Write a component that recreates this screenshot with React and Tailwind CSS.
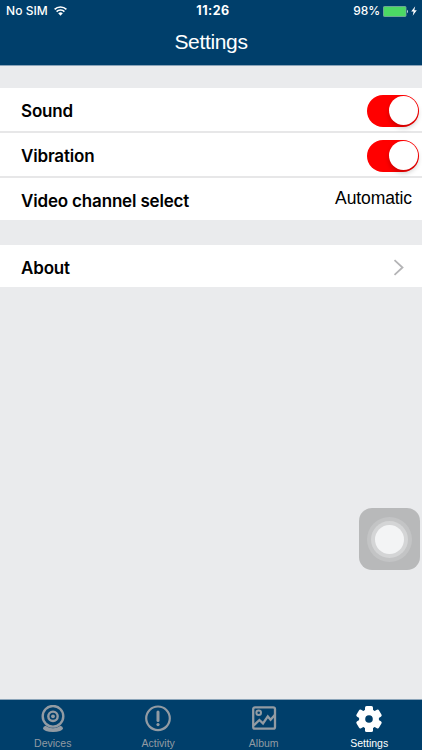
import React from "react";

function StatusBar() {
  return (
    <div className="relative flex h-[22px] items-center justify-between pl-[6px] pr-[5px] font-['Inter',sans-serif] text-[12px] leading-none text-white">
      <div className="flex items-center gap-[6px]">
        <span className="font-medium tracking-[0.05px]">No SIM</span>
        <svg className="mb-[1px]" width="13" height="10" viewBox="0 0 13 10" fill="none" stroke="currentColor" strokeWidth="1.6">
          <path d="M0.6 3.4a8.4 8.4 0 0 1 11.8 0" />
          <path d="M2.6 5.6a5.5 5.5 0 0 1 7.8 0" />
          <path d="M4.2 7.3a3.3 3.3 0 0 1 4.6 0L6.5 9.7z" fill="currentColor" stroke="none" />
        </svg>
      </div>
      <span className="absolute left-[213px] -translate-x-1/2 text-[12.5px] font-bold tracking-[0.5px]">11:26</span>
      <div className="flex items-center">
        <span className="mr-[3px] font-medium tracking-[-0.1px]">98%</span>
        <svg width="26" height="11" viewBox="0 0 26 11">
          <rect x="0.5" y="0.5" width="22.5" height="10" rx="0.8" fill="#4cd964" stroke="#7fae9f" strokeWidth="0.8" />
          <path d="M24 3.8c1.3.4 1.3 3 0 3.4z" fill="#c5d5e0" />
        </svg>
        <svg className="ml-[2px]" width="6" height="10" viewBox="0 0 6 10" fill="currentColor">
          <path d="M4.2 0.3 0.2 5.5h2.4L1.7 9.7 5.8 4.3H3.3z" />
        </svg>
      </div>
    </div>
  );
}

function Toggle() {
  return (
    <div className="flex h-[32px] w-[52px] items-center justify-end rounded-full bg-[#ff0000] pr-[1.5px]">
      <div className="h-[29px] w-[29px] rounded-full bg-white shadow-[0_3px_5px_rgba(0,0,0,0.2)]" />
    </div>
  );
}

function Row({ label, last, children }) {
  return (
    <div className={`flex items-center justify-between bg-white pl-[21px] ${last ? "h-[42px]" : "h-[43px]"}`}>
      <span
        className={`font-['Inter',sans-serif] text-[17px] font-semibold tracking-[-0.17px] text-black ${last ? "pt-[5px]" : "pt-[4px]"}`}
      >
        {label}
      </span>
      {children}
    </div>
  );
}

function DevicesIcon() {
  return (
    <svg width="28" height="28" viewBox="0 0 28 28" fill="none" stroke="currentColor">
      <ellipse cx="14" cy="23.2" rx="10" ry="3.8" fill="currentColor" stroke="none" />
      <circle cx="14" cy="11.3" r="11.9" fill="#003f6b" stroke="none" />
      <circle cx="14" cy="11.3" r="10.3" strokeWidth="2.4" />
      <circle cx="14" cy="11.3" r="4.7" strokeWidth="2.4" />
      <circle cx="14" cy="11.3" r="1.9" fill="currentColor" stroke="none" />
    </svg>
  );
}

function ActivityIcon() {
  return (
    <svg width="28" height="28" viewBox="0 0 28 28" fill="none" stroke="currentColor">
      <circle cx="14" cy="13.3" r="11.8" strokeWidth="2.2" />
      <path d="M14 7v8.4" strokeWidth="3" strokeLinecap="round" />
      <circle cx="14" cy="19.6" r="1.6" fill="currentColor" stroke="none" />
    </svg>
  );
}

function AlbumIcon() {
  return (
    <svg width="28" height="28" viewBox="0 0 28 28" fill="none" stroke="currentColor" strokeWidth="2.3">
      <rect x="3.2" y="2.3" width="21.8" height="21.4" rx="1.8" />
      <circle cx="8.7" cy="7.7" r="2.3" strokeWidth="2" />
      <path d="M3.8 20.4l5.6-5.4 3.6 3.4 4.8-7 2.8 3.4L24.8 10" />
    </svg>
  );
}

function SettingsIcon() {
  return (
    <svg width="28" height="28" viewBox="0 0 28 28" fill="currentColor">
      <circle cx="14" cy="14" r="10" />
      <rect x="10" y="1" width="8" height="26" rx="1.6" />
      <rect x="10" y="1" width="8" height="26" rx="1.6" transform="rotate(60 14 14)" />
      <rect x="10" y="1" width="8" height="26" rx="1.6" transform="rotate(120 14 14)" />
      <circle cx="14" cy="14" r="3.8" fill="#003f6b" />
    </svg>
  );
}

const tabs = [
  { name: "Devices", icon: DevicesIcon },
  { name: "Activity", icon: ActivityIcon },
  { name: "Album", icon: AlbumIcon },
  { name: "Settings", icon: SettingsIcon, active: true }
];

function App() {
  return (
    <div className="relative flex h-[750px] w-[422px] flex-col overflow-hidden bg-[#eaebed] font-['Liberation_Sans',sans-serif]">
      <header className="h-[66px] border-b border-[#8ba4b9] bg-[#003f6b]">
        <StatusBar />
        <h1 className="pt-[4px] text-center text-[21px] leading-[32px] tracking-[-0.35px] text-white">Settings</h1>
      </header>

      <main className="flex-1 pt-[22px]">
        <div className="flex flex-col gap-[2px] bg-[#e7e7e8]">
          <Row label="Sound">
            <div className="pr-[3px] pt-[2px]">
              <Toggle />
            </div>
          </Row>
          <Row label="Vibration">
            <div className="pr-[3px] pt-[2px]">
              <Toggle />
            </div>
          </Row>
          <Row label="Video channel select" last>
            <span className="pb-[1px] pr-[10px] text-[17.5px] tracking-[-0.1px] text-black">Automatic</span>
          </Row>
        </div>

        <div className="mt-[25px]">
          <Row label="About" last>
            <svg className="mr-[17px] mt-[2px]" width="12" height="17" viewBox="0 0 12 17" fill="none" stroke="#b4b4b6" strokeWidth="1.8">
              <path d="M1.5 1.2 9.5 8.5 1.5 15.8" />
            </svg>
          </Row>
        </div>
      </main>

      <nav className="grid h-[51px] grid-cols-4 border-t border-[#8ba4b9] bg-[#003f6b]">
        {tabs.map((tab) => {
          const Icon = tab.icon;
          return (
            <div
              key={tab.name}
              className={`flex flex-col items-center pt-[5px] ${tab.active ? "text-white" : "text-[#929ba3]"}`}
            >
              <Icon />
              <span className="mt-[4px] text-[10.5px] leading-[12px]">{tab.name}</span>
            </div>
          );
        })}
      </nav>

      {/* assistive touch button */}
      <div className="absolute left-[359px] top-[508px] flex h-[62px] w-[61px] items-center justify-center rounded-[13px] bg-[#b8b9ba]">
        <div className="flex h-[45px] w-[45px] items-center justify-center rounded-full bg-[#c3c4c5]">
          <div className="flex h-[37px] w-[37px] items-center justify-center rounded-full bg-[#d4d5d6]">
            <div className="h-[29px] w-[29px] rounded-full bg-[#f3f4f5]" />
          </div>
        </div>
      </div>
    </div>
  );
}

export default App;
